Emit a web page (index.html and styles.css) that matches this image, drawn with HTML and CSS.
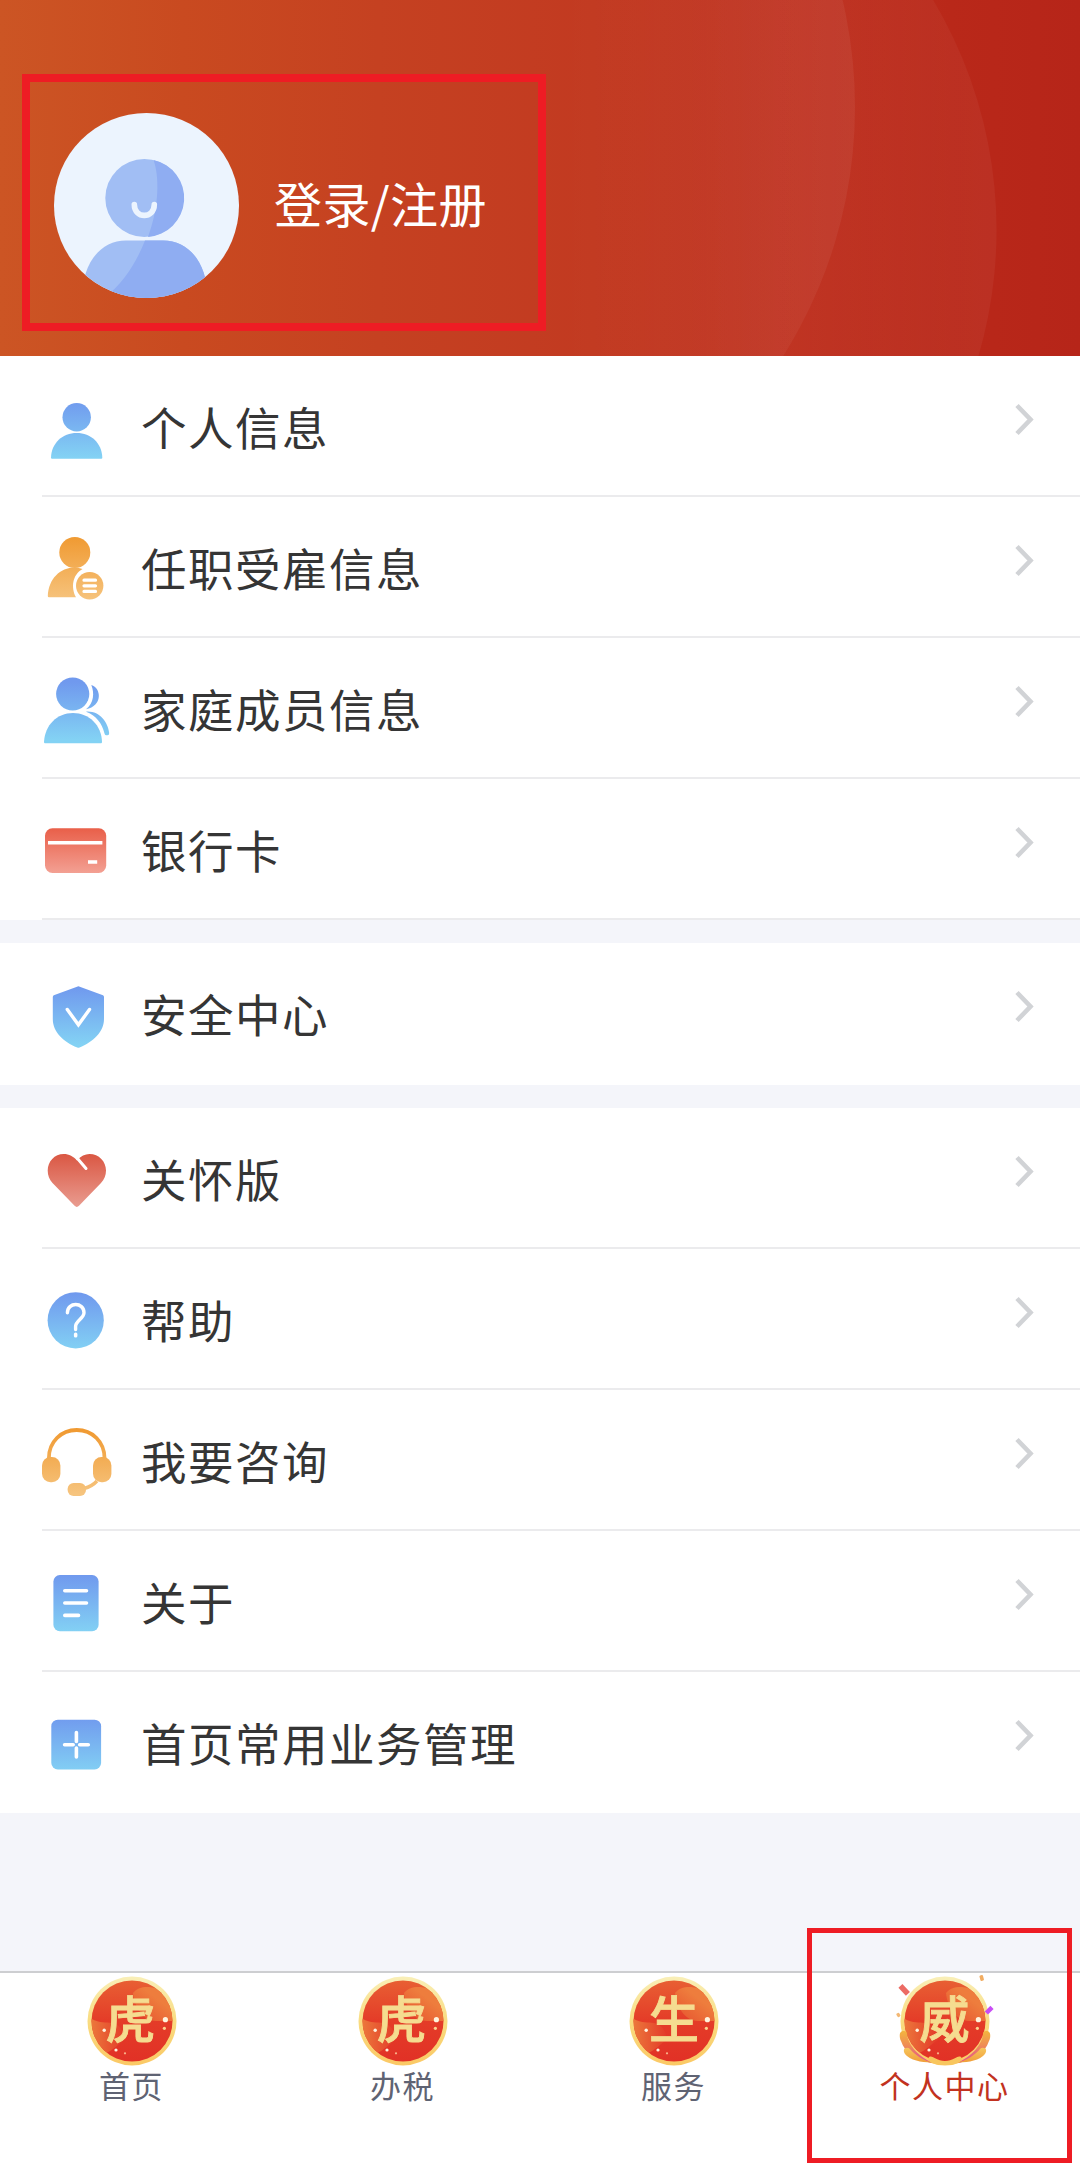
FILE: index.html
```html
<!DOCTYPE html>
<html lang="zh-CN">
<head>
<meta charset="utf-8">
<title>个人中心</title>
<link rel="stylesheet" href="styles.css">
</head>
<body>
<svg class="defs" width="0" height="0" aria-hidden="true">
  <defs>
    <linearGradient id="blue" gradientUnits="userSpaceOnUse" x1="0" y1="10" x2="0" y2="68"><stop offset="0" stop-color="#7099ee"/><stop offset="1" stop-color="#83d2f4"/></linearGradient>
    <linearGradient id="orange" gradientUnits="userSpaceOnUse" x1="0" y1="6" x2="0" y2="70"><stop offset="0" stop-color="#f09a32"/><stop offset="1" stop-color="#f6c47e"/></linearGradient>
    <linearGradient id="card" x1="0" y1="0" x2="0" y2="1"><stop offset="0" stop-color="#e95f49"/><stop offset="1" stop-color="#f3a093"/></linearGradient>
    <linearGradient id="heart" x1="0" y1="0" x2="0" y2="1"><stop offset="0" stop-color="#da5743"/><stop offset="1" stop-color="#e99c90"/></linearGradient>
    <linearGradient id="ring" x1="0" y1="0" x2="0" y2="1"><stop offset="0" stop-color="#f9efb8"/><stop offset=".5" stop-color="#f9dc80"/><stop offset="1" stop-color="#fbc864"/></linearGradient>
    <linearGradient id="disc" x1="0" y1="0" x2="0" y2="1"><stop offset="0" stop-color="#e85f33"/><stop offset=".5" stop-color="#e43c28"/><stop offset="1" stop-color="#e13126"/></linearGradient>
    <linearGradient id="blobA" x1="1" y1="0" x2="0" y2="1"><stop offset=".4" stop-color="#ee7d3d"/><stop offset="1" stop-color="#e6502e"/></linearGradient>
    <linearGradient id="blobB" x1="0" y1="0" x2="1" y2="0"><stop offset=".1" stop-color="#ec7a3c"/><stop offset="1" stop-color="#e33a29"/></linearGradient>
    <linearGradient id="petal" x1="0" y1="0" x2="0" y2="1"><stop offset="0" stop-color="#f3b53e"/><stop offset=".45" stop-color="#ef8c55"/><stop offset="1" stop-color="#e0489a"/></linearGradient>
    <linearGradient id="petalLow" x1="0" y1="0" x2="0" y2="1"><stop offset="0" stop-color="#f7c65c"/><stop offset="1" stop-color="#f09c38"/></linearGradient>
    <clipPath id="discClip"><circle cx="50" cy="50" r="40.5"/></clipPath>
    <clipPath id="avatarClip"><circle cx="92.5" cy="92.5" r="92.5"/></clipPath>
    <linearGradient id="arcFade" gradientUnits="userSpaceOnUse" x1="560" y1="0" x2="855" y2="0"><stop offset="0" stop-color="#fff" stop-opacity="0"/><stop offset="1" stop-color="#fff" stop-opacity=".055"/></linearGradient>
    <linearGradient id="arcFade2" gradientUnits="userSpaceOnUse" x1="700" y1="0" x2="997" y2="0"><stop offset="0" stop-color="#fff" stop-opacity="0"/><stop offset="1" stop-color="#fff" stop-opacity=".045"/></linearGradient>
    <symbol id="badge" viewBox="0 0 100 100">
      <circle cx="50" cy="50" r="44.5" fill="url(#ring)"/>
      <circle cx="50" cy="50" r="40.5" fill="url(#disc)"/>
      <g clip-path="url(#discClip)">
        <path d="M51 22C56 16 62 16 67 16L95 20V50H74C60 50 52 34 51 22Z" fill="url(#blobA)"/>
        <path d="M8 47C18 53 24 51 30 52C38 53 43 62 43 69C36 73 32 79 24 82L4 80Z" fill="url(#blobB)"/>
      </g>
    </symbol>
    <symbol id="sparkles" viewBox="0 0 100 100">
      <g fill="#fff3de">
        <circle cx="83.4" cy="48.7" r="2.6"/><circle cx="82.4" cy="57.3" r="1.6" fill="#fbd38e"/><circle cx="22.2" cy="59.3" r="1.7"/><circle cx="34" cy="79" r="1.6"/><circle cx="43" cy="82.3" r="1.1" fill="#f9b48c"/>
      </g>
    </symbol>
    <symbol id="chevron" viewBox="0 0 24 40"><path d="M3 6.5L16.500 20.500L3 34.500" fill="none" stroke="#d1d3d6" stroke-width="4.6"/></symbol>
  </defs>
</svg>

<div class="page">
  <header class="profile">
    <svg class="profile-bg" viewBox="0 0 1080 356" aria-hidden="true">
      <circle cx="548" cy="230" r="448.5" fill="url(#arcFade2)"/>
      <circle cx="387" cy="107" r="468" fill="url(#arcFade)"/>
    </svg>
    <svg class="avatar" viewBox="0 0 185 185">
      <g clip-path="url(#avatarClip)">
        <rect width="185" height="185" fill="#ecf4fe"/>
        <circle cx="90.3" cy="85" r="39" fill="#a1bef4"/>
        <path d="M99.5 47C105 62 106 92 94 124A39 39 0 0 0 99.5 47Z" fill="#8fadf2"/>
        <path d="M28 185C28 151 46 127.500 72 127.500H109C135 127.500 153.500 150 153.500 185Z" fill="#a1bef4"/>
        <path d="M91 127.500H109C135 127.500 153.500 150 153.500 185H50C70 170 83 148 91 127.500Z" fill="#8fadf2"/>
        <path d="M80.300 91.500C80.300 106 100.300 106 100.300 91.500" fill="none" stroke="#ecf4fe" stroke-width="5.600" stroke-linecap="round"/>
      </g>
    </svg>
    <span class="login">登录/注册</span>
  </header>

  <section class="group">
    <div class="row">
      <svg class="icon" viewBox="0 0 72 72" fill="url(#blue)"><circle cx="36.700" cy="27.300" r="14.200"/><path d="M12 68.800Q11 68.800 11 67.500C11.500 53 22.500 43 36.700 43S61.800 53 62.300 67.500Q62.300 68.800 61.300 68.800Z"/></svg>
      <span class="label">个人信息</span><svg class="chevron"><use href="#chevron"/></svg>
    </div>
    <div class="row">
      <svg class="icon" viewBox="0 0 72 72"><g fill="url(#orange)"><circle cx="34.800" cy="21.500" r="15.500"/><path d="M9 66.300Q7.700 66.300 7.800 65C8.500 48 20 36.500 34.800 36.500Q39 36.500 42.500 38C32 44 31 57 36 66.300Z"/><circle cx="49.700" cy="54.700" r="13.700"/></g><path d="M44 49.200H55.500M44 54.800H55.500M44 60.400H55.500" stroke="#fff" stroke-width="3.200" stroke-linecap="round"/></svg>
      <span class="label">任职受雇信息</span><svg class="chevron"><use href="#chevron"/></svg>
    </div>
    <div class="row">
      <svg class="icon" viewBox="0 0 72 72" fill="url(#blue)"><circle cx="32.700" cy="22" r="16.600"/><path d="M5 71.300Q4 71.300 4 70C5 53 17 41 33 41S61.500 53 62 70Q62 71.300 61 71.300Z"/><path d="M51.300 13C61.500 16 63 34 46 37.300C54 31 54.500 21 51.300 13Z"/><path d="M46 39.700C59 38.500 68 50 69.200 61Q69.300 63.300 67.500 63.300H66Q64.800 63.300 64.500 61.500C62 51 56 43.500 46 39.700Z"/></svg>
      <span class="label">家庭成员信息</span><svg class="chevron"><use href="#chevron"/></svg>
    </div>
    <div class="row">
      <svg class="icon" viewBox="0 0 72 72"><rect x="5" y="15.300" width="61.200" height="44.700" rx="7.500" fill="url(#card)"/><path d="M8 29.700H62.400M48 49H57.200" stroke="#fff" stroke-width="3.400"/></svg>
      <span class="label">银行卡</span><svg class="chevron"><use href="#chevron"/></svg>
    </div>
  </section>

  <section class="group group-single">
    <div class="row">
      <svg class="icon" viewBox="0 0 72 72"><path d="M38.400 9.300L63 18.200Q64 18.600 64 20V42C64 55 53 65 39.500 70.500Q38.400 71 37.300 70.500C23.500 65 12.800 55 12.800 42V20Q12.800 18.600 13.800 18.200Z" fill="url(#blue)"/><path d="M27.300 32.500L38.400 47.800L49.500 32.500" fill="none" stroke="#fff" stroke-width="3.400" stroke-linecap="round"/></svg>
      <span class="label">安全中心</span><svg class="chevron"><use href="#chevron"/></svg>
    </div>
  </section>

  <section class="group">
    <div class="row">
      <svg class="icon" viewBox="0 0 72 72"><path d="M37 18.500C41 14 45 12 49.500 12C59 12 66 19.500 66 28.500C66 33.500 64.300 37.500 61 41L39 63.800Q36.800 66 34.600 63.800L12.500 41C9.300 37.500 7.700 33.500 7.700 28.500C7.700 19.500 14.500 12 23.800 12C29 12 33.500 14.500 37 18.500Z" fill="url(#heart)"/><path d="M37.500 16.500L46 26.500" stroke="#fff" stroke-width="3" stroke-linecap="round"/></svg>
      <span class="label">关怀版</span><svg class="chevron"><use href="#chevron"/></svg>
    </div>
    <div class="row">
      <svg class="icon" viewBox="0 0 72 72"><circle cx="35.700" cy="37.300" r="28.100" fill="url(#blue)"/><path d="M27.400 29.800C27.400 18.800 44 18.800 44 29.800C44 35.500 35.600 37.500 35.600 43.500V46.500" fill="none" stroke="#fff" stroke-width="3.400" stroke-linecap="round"/><rect x="33.900" y="49.500" width="3.500" height="5" rx="1.600" fill="#fff"/></svg>
      <span class="label">帮助</span><svg class="chevron"><use href="#chevron"/></svg>
    </div>
    <div class="row">
      <svg class="icon" viewBox="0 0 72 72"><path d="M8.900 34C8.900 18 21 6 36.700 6S64.500 18 64.500 34" fill="none" stroke="url(#orange)" stroke-width="3.800"/><path d="M57 57Q52 62.500 44 64.500" fill="none" stroke="url(#orange)" stroke-width="3.400"/><g fill="url(#orange)"><rect x="2" y="33" width="18.400" height="25.200" rx="8.500"/><rect x="53" y="33" width="18.400" height="25.200" rx="8.500"/><rect x="27.600" y="59" width="18.400" height="13" rx="6"/></g></svg>
      <span class="label">我要咨询</span><svg class="chevron"><use href="#chevron"/></svg>
    </div>
    <div class="row">
      <svg class="icon" viewBox="0 0 72 72"><rect x="13.400" y="10" width="45.200" height="56.200" rx="6.500" fill="url(#blue)"/><path d="M24.800 25.700H46.500M24.800 38H46.500M24.800 50.400H38.500" stroke="#fff" stroke-width="3.600" stroke-linecap="round"/></svg>
      <span class="label">关于</span><svg class="chevron"><use href="#chevron"/></svg>
    </div>
    <div class="row">
      <svg class="icon" viewBox="0 0 72 72"><rect x="11.300" y="13.700" width="49.800" height="49.800" rx="6.500" fill="url(#blue)"/><path d="M36.400 26.500V35.500M36.400 42V51M24.600 38.800H33.200M39.700 38.800H48.300" stroke="#fff" stroke-width="3.600" stroke-linecap="round"/></svg>
      <span class="label">首页常用业务管理</span><svg class="chevron"><use href="#chevron"/></svg>
    </div>
  </section>

  <nav class="tabs">
    <div class="tab"><svg class="tab-icon" viewBox="0 0 100 100"><use href="#badge"/><text class="seal" x="48.500" y="66.500">虎</text><use href="#sparkles"/></svg><span>首页</span></div>
    <div class="tab"><svg class="tab-icon" viewBox="0 0 100 100"><use href="#badge"/><text class="seal" x="48.500" y="66.500">虎</text><use href="#sparkles"/></svg><span>办税</span></div>
    <div class="tab"><svg class="tab-icon" viewBox="0 0 100 100"><use href="#badge"/><text class="seal" x="50" y="66.500">生</text><use href="#sparkles"/></svg><span>服务</span></div>
    <div class="tab tab-active"><svg class="tab-icon" viewBox="0 0 100 100"><use href="#badge"/>
      <path d="M9 60C4 59 4 66 6 70C10 82 20 89 38 92C24 86 13 74 12 63Q12 60 9 60Z" fill="url(#petal)"/>
      <path d="M91 60C96 59 96 66 94 70C90 82 80 89 62 92C76 86 87 74 88 63Q88 60 91 60Z" fill="url(#petal)"/>
      <path d="M11 77C8 77 8 82 12 85C19 91 30 91 40 92C28 90 19 83 15 78Q13 76 11 77Z" fill="url(#petalLow)"/>
      <path d="M89 77C92 77 92 82 88 85C81 91 70 91 60 92C72 90 81 83 85 78Q87 76 89 77Z" fill="url(#petalLow)"/>
      <path d="M34 86C38 84 41 90 50 90S62 84 66 86C69 89 64 94 50 94S31 89 34 86Z" fill="#f8c65e"/>
      <rect x="-2.500" y="-5.500" width="5.500" height="11" fill="#ec6b64" transform="translate(9 19) rotate(-43)"/>
      <rect x="-1.800" y="-2.800" width="3.600" height="5.600" rx="1" fill="#f1ac62" transform="translate(86.700 7) rotate(-15)"/>
      <rect x="-2" y="-4" width="4.500" height="8" fill="#c94df5" transform="translate(94 39) rotate(45)"/>
      <rect x="-1.500" y="-2" width="3.200" height="4" rx="1" fill="#f3b874" transform="translate(3.300 44) rotate(-30)"/>
      <text class="seal" x="49.500" y="66.500">威</text><use href="#sparkles"/></svg><span>个人中心</span></div>
  </nav>

  <div class="mark mark-login"></div>
  <div class="mark mark-tab"></div>
</div>
</body>
</html>
```
FILE: styles.css
```css
* { box-sizing: border-box; }

body {
  margin: 0;
  background: #f4f5fa;
  font-family: "Noto Sans CJK SC", "Noto Sans", sans-serif;
  color: #353535;
}

.defs { display: block; }

.page {
  position: relative;
  display: flex;
  flex-direction: column;
  width: 1080px;
  height: 2175px;
  overflow: hidden;
}

.profile {
  position: relative;
  display: flex;
  align-items: center;
  gap: 35px;
  height: 356px;
  padding: 55px 0 0 54px;
  background: linear-gradient(90deg, #cc5524 0%, #c94a20 17%, #c54121 35%, #c23a21 55%, #bf3220 72%, #b92819 88%, #b62519 100%);
}

.profile-bg {
  position: absolute;
  inset: 0;
  width: 1080px;
  height: 356px;
}

.avatar {
  position: relative;
  width: 185px;
  height: 185px;
}

.login {
  position: relative;
  margin-bottom: 7px;
  color: #fff;
  font-size: 48px;
  line-height: 72px;
  letter-spacing: .4px;
}

.group {
  background: #fff;
  margin-bottom: 23px;
}

.row {
  display: flex;
  align-items: flex-start;
  height: 141px;
  margin-left: 42px;
  padding-top: 34px;
  border-bottom: 2px solid #ebebed;
}

.group-single .row { height: 142px; }

.group-single .row,
.group:last-of-type .row:last-child { border-bottom-color: transparent; }

.icon {
  flex: none;
  width: 72px;
  height: 72px;
  margin-left: -2px;
}

.label {
  flex: 1;
  margin-left: 29px;
  font-size: 45.5px;
  line-height: 72px;
  letter-spacing: 1.5px;
}

.chevron {
  width: 24px;
  height: 40px;
  margin: 9px 42px 0 0;
}

.tabs {
  display: grid;
  grid-template-columns: repeat(4, 271px);
  height: 204px;
  margin: auto 0 0 -4px;
  background: #fff;
  border-top: 2px solid #cdced1;
}

.tab {
  display: flex;
  flex-direction: column;
  align-items: center;
  color: #5f6373;
  font-size: 31px;
  line-height: 40px;
  letter-spacing: 1.5px;
}

.tab-active { color: #c23220; }

.tab-icon {
  width: 100px;
  height: 100px;
  margin: -2px 0 -6px;
}

.seal {
  fill: #f5dc90;
  stroke: #f5dc90;
  stroke-width: .9px;
  font-size: 50px;
  font-weight: 500;
  letter-spacing: 0;
  text-anchor: middle;
}

.mark {
  position: absolute;
  border: 8px solid #ee1c24;
}

.mark-login {
  left: 22px;
  top: 74px;
  width: 524px;
  height: 257px;
}

.mark-tab {
  left: 807px;
  top: 1928px;
  width: 265px;
  height: 235px;
  border-width: 5px;
}
```
